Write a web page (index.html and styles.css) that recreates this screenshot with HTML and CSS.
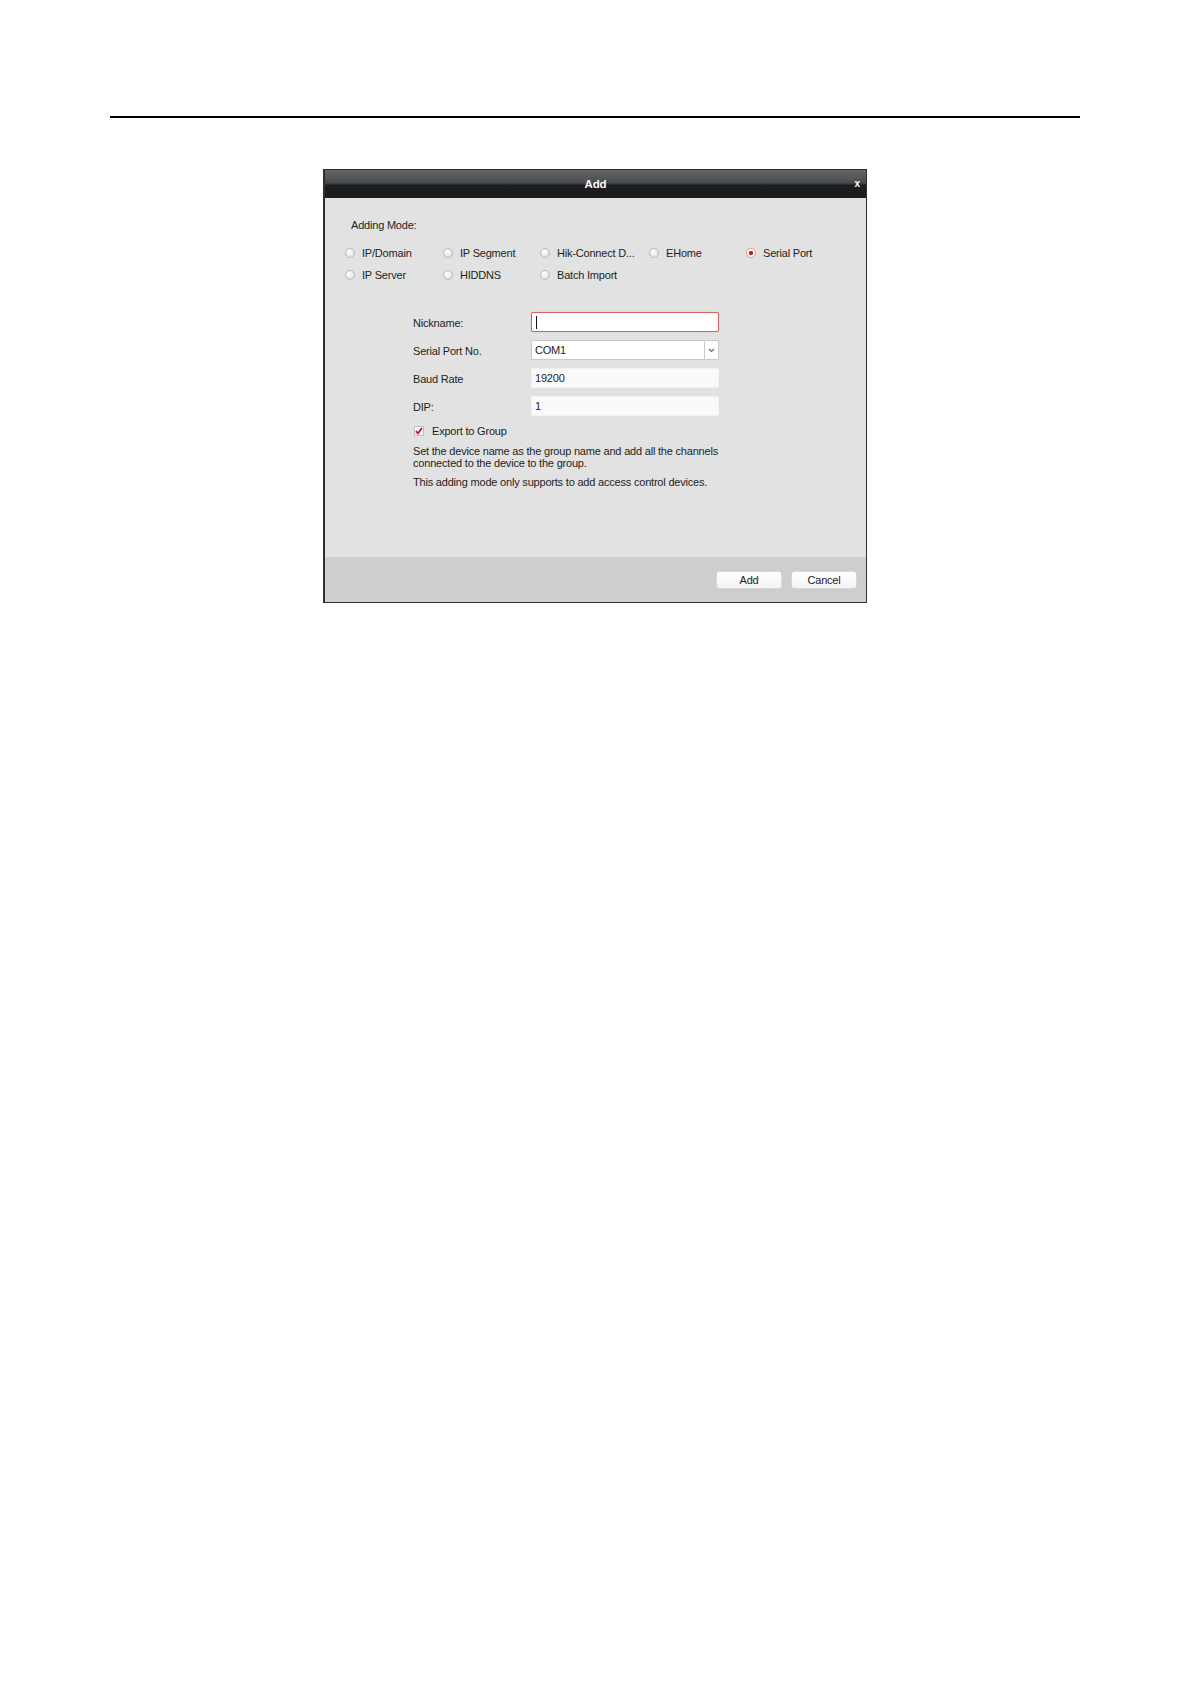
FILE: index.html
```html
<!DOCTYPE html>
<html>
<head>
<meta charset="utf-8">
<link rel="stylesheet" href="styles.css">
</head>
<body>
<div class="page">
  <div class="rule"></div>
  <div class="dialog">
    <div class="titlebar">
      <span class="title">Add</span>
      <span class="close">x</span>
    </div>
    <div class="content">
      <div class="mode-label">Adding Mode:</div>
      <div class="modes">
        <div class="opt"><span class="radio"></span>IP/Domain</div>
        <div class="opt"><span class="radio"></span>IP Segment</div>
        <div class="opt"><span class="radio"></span>Hik-Connect D...</div>
        <div class="opt"><span class="radio"></span>EHome</div>
        <div class="opt"><span class="radio checked"></span>Serial Port</div>
        <div class="opt"><span class="radio"></span>IP Server</div>
        <div class="opt"><span class="radio"></span>HIDDNS</div>
        <div class="opt"><span class="radio"></span>Batch Import</div>
      </div>
      <div class="form">
        <div class="row">
          <div class="label">Nickname:</div>
          <div class="field active"><span class="caret"></span></div>
        </div>
        <div class="row">
          <div class="label">Serial Port No.</div>
          <div class="field select"><span class="value">COM1</span><span class="drop"><svg width="7" height="5" viewBox="0 0 7 5"><path d="M1 1 L3.5 3.5 L6 1" fill="none" stroke="#666" stroke-width="1.2"/></svg></span></div>
        </div>
        <div class="row">
          <div class="label">Baud Rate</div>
          <div class="field plain"><span class="value">19200</span></div>
        </div>
        <div class="row">
          <div class="label">DIP:</div>
          <div class="field plain"><span class="value">1</span></div>
        </div>
        <div class="check-row">
          <span class="checkbox"><svg width="8" height="8" viewBox="0 0 8 8"><path d="M1 4.2 L3 6.3 L7 1" fill="none" stroke="#c8102e" stroke-width="1.8"/></svg></span>
          <span>Export to Group</span>
        </div>
        <p class="note">Set the device name as the group name and add all the channels<br>connected to the device to the group.</p>
        <p class="note second">This adding mode only supports to add access control devices.</p>
      </div>
    </div>
    <div class="footer">
      <button class="btn">Add</button>
      <button class="btn">Cancel</button>
    </div>
  </div>
</div>
</body>
</html>
```
FILE: styles.css
```css
html, body {
  margin: 0;
  padding: 0;
  background: #ffffff;
}

.page {
  padding-top: 116px;
  font-family: "Liberation Sans", Arial, sans-serif;
  font-size: 11px;
  color: #1e1e1e;
}

.rule {
  margin-left: 110px;
  width: 970px;
  height: 2px;
  background: #000000;
}

.dialog {
  margin-top: 51px;
  margin-left: 323px;
  width: 544px;
  box-sizing: border-box;
  border: 1px solid #2e2e2e;
  border-left-width: 2px;
  background: #e2e2e2;
}

.titlebar {
  height: 28px;
  position: relative;
  display: flex;
  align-items: center;
  justify-content: center;
  background: linear-gradient(#64676a 0, #4a4d50 45%, #2b2c2e 52%, #1d1d1d 55%, #1c1c1c 100%);
}

.title {
  color: #ffffff;
  font-weight: bold;
  font-size: 11.5px;
  letter-spacing: -0.2px;
}

.close {
  position: absolute;
  right: 6px;
  top: 8px;
  color: #ffffff;
  font-weight: bold;
  font-size: 10px;
  line-height: 12px;
}

.content {
  height: 359px;
  box-sizing: border-box;
  padding-top: 20px;
  letter-spacing: -0.2px;
}

.mode-label {
  margin-left: 26px;
  line-height: 14px;
}

.modes {
  margin-top: 10px;
  margin-left: 20px;
  display: grid;
  grid-template-columns: 98px 97px 109px 97px 100px;
  grid-auto-rows: 22px;
}

.opt {
  display: flex;
  align-items: center;
  white-space: nowrap;
}

.radio {
  width: 10px;
  height: 10px;
  box-sizing: border-box;
  border-radius: 50%;
  border: 1px solid #bcbcbc;
  background: radial-gradient(circle at 40% 35%, #ffffff 0, #eeeeee 45%, #cfcfcf 100%);
  margin-right: 7px;
  flex: none;
}

.radio.checked {
  border-color: #df9a9a;
  background: radial-gradient(circle, #d21a1a 0, #c81818 32%, #ffffff 44%, #f0f0f0 100%);
}

.form {
  margin-top: 26px;
  margin-left: 88px;
}

.row {
  display: flex;
  align-items: center;
  height: 20px;
  margin-bottom: 8px;
}

.label {
  width: 118px;
  padding-top: 2px;
}

.field {
  width: 188px;
  height: 20px;
  box-sizing: border-box;
  display: flex;
  align-items: center;
  background: #ffffff;
  border: 1px solid #d4d4d4;
}

.field.active {
  border: 1px solid #d9605d;
  border-radius: 2px;
  box-shadow: 0 0 1px #e99a98;
}

.caret {
  width: 1px;
  height: 13px;
  background: #111111;
  margin-left: 4px;
}

.field.plain {
  border-color: #f1f1f1;
  background: #fafafa;
}

.value {
  padding-left: 3px;
  flex: 1;
}

.field.select {
  border-color: #c9c9c9;
}

.drop {
  width: 13px;
  height: 18px;
  border-left: 1px solid #c9c9c9;
  display: flex;
  align-items: center;
  justify-content: center;
}

.check-row {
  display: flex;
  align-items: center;
  height: 14px;
  padding-left: 1px;
}

.checkbox {
  width: 10px;
  height: 10px;
  box-sizing: border-box;
  border: 1px solid #bdbdbd;
  background: linear-gradient(#ffffff, #ececec);
  margin-right: 8px;
  display: flex;
  align-items: center;
  justify-content: center;
}

.note {
  margin: 7px 0 0 0;
  line-height: 12px;
}

.footer {
  height: 45px;
  box-sizing: border-box;
  background: #cecece;
  display: flex;
  justify-content: flex-end;
  align-items: flex-start;
  gap: 9px;
  padding-top: 14px;
  padding-right: 9px;
}

.btn {
  width: 66px;
  height: 18px;
  padding: 0;
  font-family: "Liberation Sans", Arial, sans-serif;
  font-size: 11px;
  letter-spacing: -0.2px;
  color: #1e1e1e;
  border: 1px solid #d8d8d8;
  border-radius: 3px;
  background: linear-gradient(#ffffff, #f3f3f3);
}
```
